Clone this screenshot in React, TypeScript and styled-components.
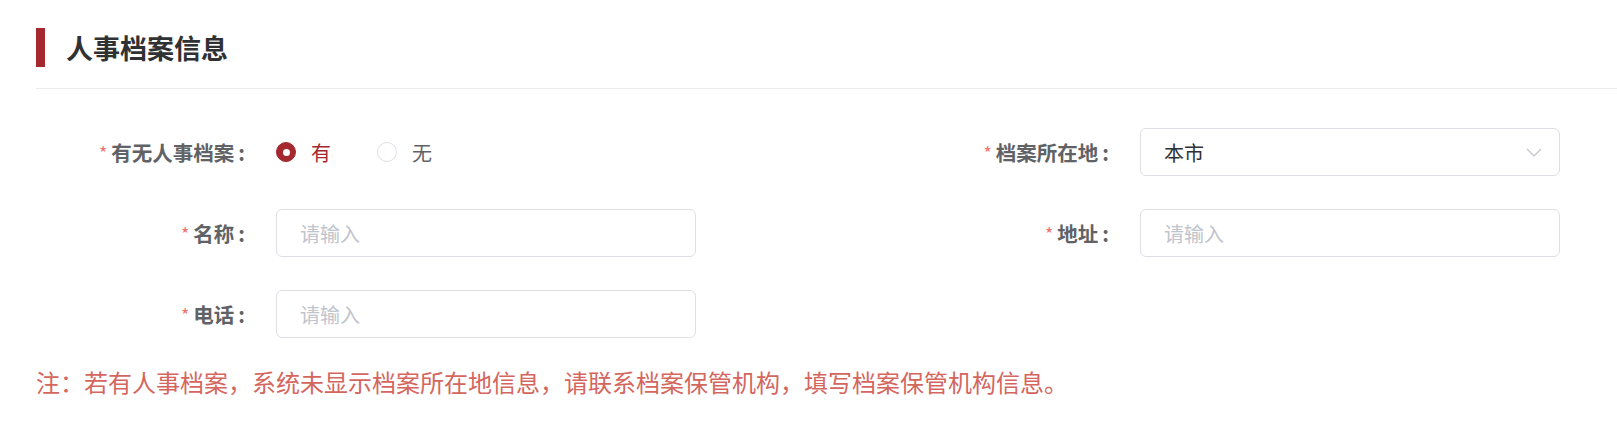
import React from "react";
import styled, { createGlobalStyle } from "styled-components";

const GlobalStyle = createGlobalStyle`
  html, body { margin: 0; padding: 0; background: #ffffff; }
  body { font-family: "Noto Sans CJK SC", "Noto Sans", sans-serif; }
  * { box-sizing: border-box; }
`;

const Page = styled.div`
  padding: 28px 0 0 36px;
`;

const Header = styled.div`
  display: flex;
  align-items: center;
  height: 39px;
`;

const Bar = styled.div`
  width: 9px;
  height: 39px;
  background: #a4282e;
`;

const Title = styled.h2`
  margin: 0 0 0 21px;
  font-size: 27px;
  font-weight: 700;
  color: #303133;
  line-height: 39px;
`;

const Divider = styled.div`
  margin-top: 21px;
  height: 1px;
  background: #ececec;
`;

const Form = styled.div`
  margin-top: 39px;
  display: grid;
  grid-template-columns: 864px 1fr;
  row-gap: 33px;
`;

const Item = styled.div`
  display: grid;
  grid-template-columns: 240px 420px;
  align-items: center;
  height: 48px;
`;

const Label = styled.label`
  display: flex;
  justify-content: flex-end;
  align-items: center;
  padding-right: 31px;
  font-size: 20.5px;
  font-weight: 700;
  color: #606266;
  line-height: 48px;
`;

const Colon = styled.span`
  margin-left: 4px;
`;

const Star = styled.span`
  color: #ee7470;
  font-size: 18px;
  font-weight: 400;
  margin-right: 4px;
  line-height: 18px;
  height: 18px;
  margin-top: -1px;
`;

const RadioGroup = styled.div`
  display: flex;
  align-items: center;
  gap: 46px;
`;

const RadioOption = styled.span<{ $checked?: boolean }>`
  display: inline-flex;
  align-items: center;
  gap: 15px;
  font-size: 20px;
  color: ${(p) => (p.$checked ? "#a4282e" : "#606266")};
`;

const RadioCircle = styled.span<{ $checked?: boolean }>`
  width: 20px;
  height: 20px;
  border-radius: 50%;
  border: 1px solid ${(p) => (p.$checked ? "#a4282e" : "#dcdfe6")};
  background: ${(p) => (p.$checked ? "#a4282e" : "#ffffff")};
  display: inline-flex;
  align-items: center;
  justify-content: center;
  &::after {
    content: "";
    width: 7px;
    height: 7px;
    border-radius: 50%;
    background: #ffffff;
    display: ${(p) => (p.$checked ? "block" : "none")};
  }
`;

const Field = styled.div<{ $placeholder?: boolean }>`
  height: 48px;
  width: 420px;
  border: 1px solid #dcdfe6;
  border-radius: 6px;
  padding: 0 17px 0 23px;
  display: flex;
  align-items: center;
  justify-content: space-between;
  font-size: 20px;
  color: ${(p) => (p.$placeholder ? "#c0c4cc" : "#303133")};
`;

const Note = styled.p`
  margin: 27px 0 0 0;
  font-size: 24px;
  line-height: 34px;
  color: #d4665e;
`;

const Chevron = () => (
  <svg width="16" height="9" viewBox="0 0 16 9" fill="none">
    <path d="M1 1l7 7 7-7" stroke="#c0c4cc" strokeWidth="1.2" />
  </svg>
);

const FormLabel = ({ text }: { text: string }) => (
  <Label>
    <Star>*</Star>
    {text}
    <Colon>:</Colon>
  </Label>
);

export default function App() {
  return (
    <>
      <GlobalStyle />
      <Page>
        <Header>
          <Bar />
          <Title>人事档案信息</Title>
        </Header>
        <Divider />
        <Form>
          <Item>
            <FormLabel text="有无人事档案" />
            <RadioGroup>
              <RadioOption $checked>
                <RadioCircle $checked />有
              </RadioOption>
              <RadioOption>
                <RadioCircle />无
              </RadioOption>
            </RadioGroup>
          </Item>
          <Item>
            <FormLabel text="档案所在地" />
            <Field>
              <span>本市</span>
              <Chevron />
            </Field>
          </Item>
          <Item>
            <FormLabel text="名称" />
            <Field $placeholder>请输入</Field>
          </Item>
          <Item>
            <FormLabel text="地址" />
            <Field $placeholder>请输入</Field>
          </Item>
          <Item>
            <FormLabel text="电话" />
            <Field $placeholder>请输入</Field>
          </Item>
        </Form>
        <Note>注：若有人事档案，系统未显示档案所在地信息，请联系档案保管机构，填写档案保管机构信息。</Note>
      </Page>
    </>
  );
}
